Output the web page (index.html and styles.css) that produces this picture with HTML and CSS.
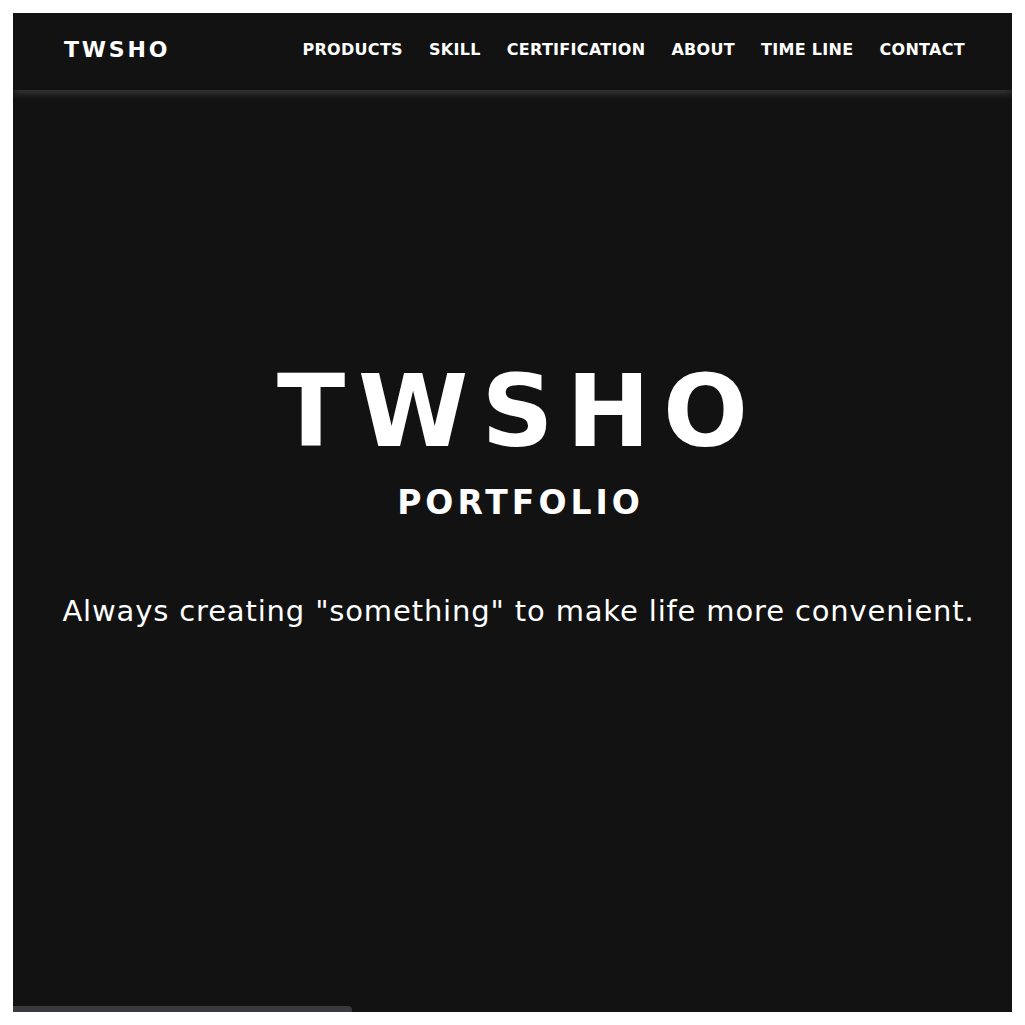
FILE: index.html
```html
<!DOCTYPE html>
<html lang="en">
<head>
<meta charset="utf-8">
<title>TWSHO Portfolio</title>
<link rel="stylesheet" href="styles.css">
</head>
<body>
<div class="page">
  <header class="header">
    <div class="logo">TWSHO</div>
    <nav class="nav">
      <a class="nav-link" href="#products">PRODUCTS</a>
      <a class="nav-link" href="#skill">SKILL</a>
      <a class="nav-link" href="#certification">CERTIFICATION</a>
      <a class="nav-link" href="#about">ABOUT</a>
      <a class="nav-link" href="#timeline">TIME LINE</a>
      <a class="nav-link" href="#contact">CONTACT</a>
    </nav>
  </header>
  <main class="hero">
    <h1 class="hero-title">TWSHO</h1>
    <p class="hero-sub">PORTFOLIO</p>
    <p class="hero-tagline">Always creating "something" to make life more convenient.</p>
  </main>
  <div class="scroll-thumb"></div>
</div>
</body>
</html>
```
FILE: styles.css
```css
html, body {
  margin: 0;
  padding: 0;
  background: #ffffff;
}
body {
  padding: 13px 13px 13px 13px;
}
.page {
  position: relative;
  height: 999px;
  background: #121212;
  color: #ffffff;
  font-family: "DejaVu Sans", "Liberation Sans", sans-serif;
  overflow: hidden;
}
.header {
  height: 77px;
  box-sizing: border-box;
  display: flex;
  align-items: center;
  justify-content: space-between;
  padding: 0 47px 5px 51px;
  box-shadow: 0 3px 8px rgba(255, 255, 255, 0.18);
}
.logo {
  font-weight: bold;
  font-size: 22px;
  letter-spacing: 2.8px;
}
.nav {
  display: flex;
  gap: 26px;
}
.nav-link {
  color: #ffffff;
  text-decoration: none;
  font-weight: bold;
  font-size: 16px;
  letter-spacing: 0.3px;
}
.hero {
  display: flex;
  flex-direction: column;
  align-items: center;
  padding-top: 272px;
}
.hero-title {
  margin: 0 -13px 0 0;
  font-size: 100px;
  font-weight: bold;
  line-height: 1;
  letter-spacing: 13px;
}
.hero-sub {
  margin: 24px -4px 0 12px;
  font-size: 33px;
  font-weight: bold;
  line-height: 1;
  letter-spacing: 4px;
}
.hero-tagline {
  margin: 78px 0 0 12px;
  font-size: 29px;
  line-height: 1;
  letter-spacing: 0.85px;
  white-space: nowrap;
}
.scroll-thumb {
  position: absolute;
  left: 0;
  bottom: 0;
  width: 339px;
  height: 6px;
  background: #3a3a3e;
  border-top-right-radius: 4px;
}
```
